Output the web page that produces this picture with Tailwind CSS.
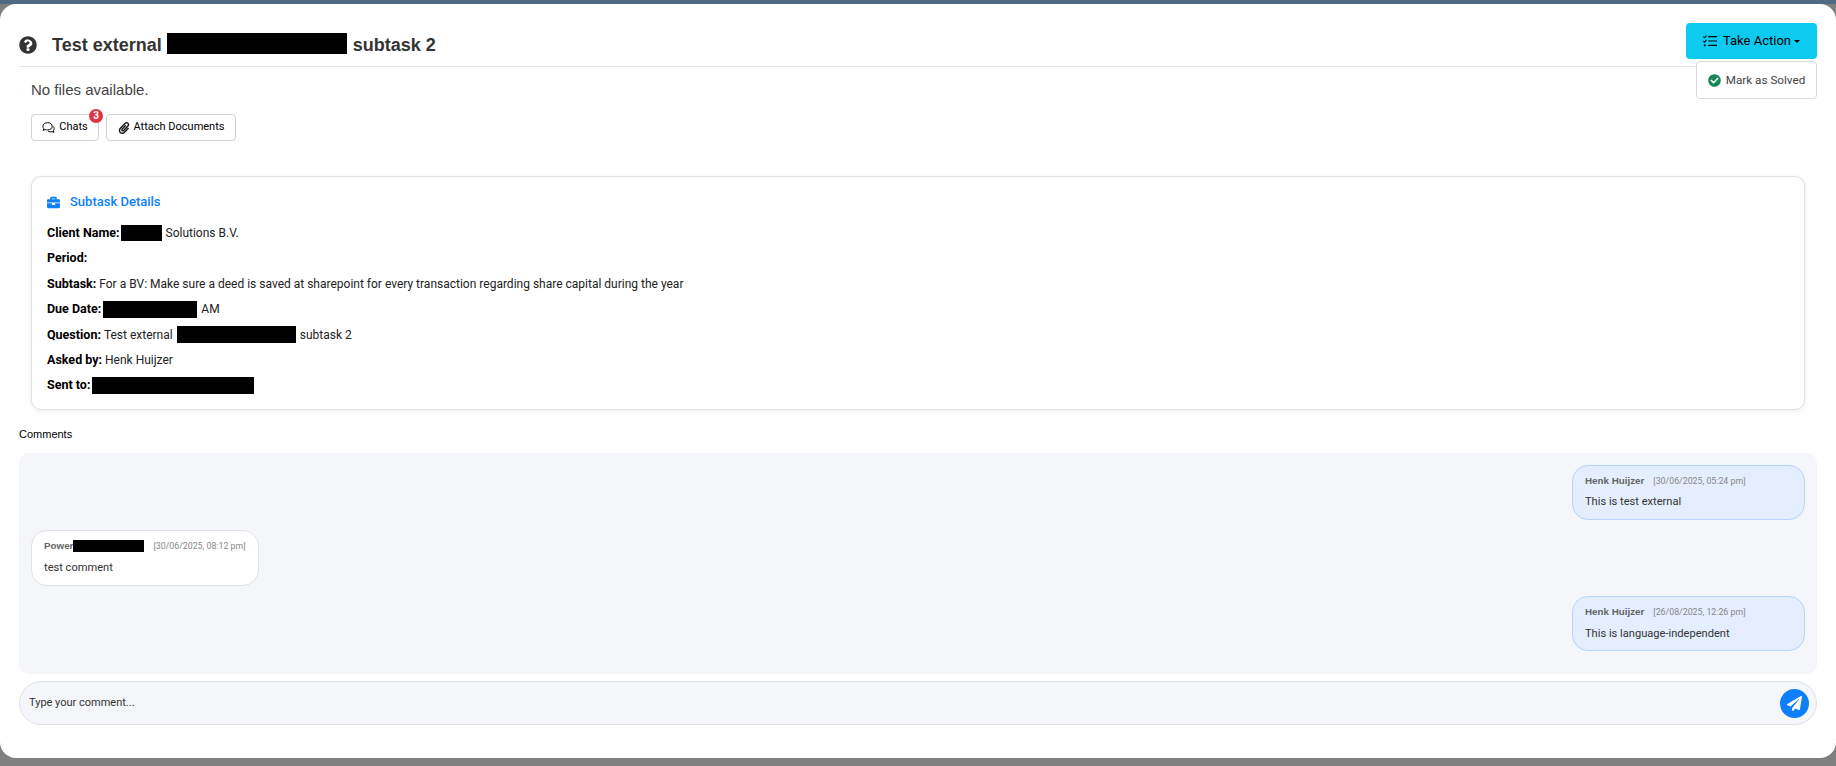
<!doctype html>
<html><head><meta charset="utf-8"><title>Subtask</title>
<script src="https://cdn.jsdelivr.net/npm/@tailwindcss/browser@4"></script></head>
<body class="m-0 h-[766px] w-[1836px] overflow-hidden bg-[#808080] font-['Roboto',sans-serif]">
<div class="h-[4px] bg-[#4f6b80]"></div>
<div class="relative h-[754px] rounded-[16px] bg-white px-[19px]">
  <header class="flex h-[63px] items-start border-b border-[#e2e4e7] font-['Liberation_Sans',sans-serif]">
    <div class="mt-[28px] flex h-[26px] items-center">
      <svg class="h-[18px] w-[18px] text-[#333]" viewBox="0 0 512 512" fill="currentColor"><path d="M504 256c0 137-111 248-248 248S8 393 8 256 119 8 256 8s248 111 248 248zM262.700 90c-54.500 0-89.200 23-116.500 63.800-3.500 5.300-2.300 12.400 2.800 16.300l34.700 26.300c5.200 3.900 12.600 3 16.700-2.100 17.900-22.700 30.100-35.800 57.300-35.800 20.400 0 45.700 13.100 45.700 33 0 15-12.400 22.700-32.600 34-23.600 13.200-54.800 29.700-54.800 70.900V320c0 6.600 5.400 12 12 12h56c6.600 0 12-5.400 12-12v-1.300c0-28.600 83.500-29.800 83.500-107.200 0-58.300-60.500-102.500-117.800-111.500zM256 338c-25.400 0-46 20.600-46 46s20.600 46 46 46 46-20.600 46-46-20.600-46-46-46z"/></svg>
      <h1 class="ml-[15px] mt-[-1px] flex items-center text-[18px] font-bold leading-none text-[#333]"><span>Test external</span><span class="ml-[5px] mr-[6px] mt-[-2px] h-[21px] w-[180px] bg-black"></span><span>subtask 2</span></h1>
    </div>
    <button class="ml-auto mt-[19px] flex h-[36px] w-[131px] items-center justify-center gap-[6px] rounded-[4px] bg-[#0dcaf0] font-['Roboto',sans-serif] text-[13px] text-black">
      <svg class="h-[14px] w-[14px]" viewBox="0 0 16 16" fill="none" stroke="currentColor" stroke-width="1.400"><path d="M6 3h10M6 8h10M6 13h10"/><path d="M0.500 3l1.300 1.300L4 1.800M0.500 8l1.300 1.300L4 6.800" stroke-width="1.200"/><path d="M1 13h2" stroke-width="2"/></svg>
      <span>Take Action</span><span class="ml-[-3px] h-0 w-0 border-x-[3.500px] border-t-[3.500px] border-x-transparent border-t-black"></span>
    </button>
  </header>
  <div class="absolute right-[19px] top-[57px] z-10 flex h-[38px] w-[121px] items-center justify-center gap-[5px] rounded-[4px] border border-[#d9dbde] bg-white pt-[1px] text-[11.700px] text-[#444]">
    <svg class="h-[13px] w-[13px] text-[#198754]" viewBox="0 0 512 512" fill="currentColor"><path d="M256 8C119 8 8 119 8 256s111 248 248 248 248-111 248-248S393 8 256 8zm-38 378L89 257l45-45 84 84 160-160 45 45z"/></svg>
    Mark as Solved
  </div>

  <div class="px-[12px] pt-[13px]">
    <p class="font-['Liberation_Sans',sans-serif] text-[15px] leading-[20px] text-[#444]">No files available.</p>
    <div class="mt-[14px] flex gap-[7px]">
      <button class="relative flex h-[27px] w-[68px] items-center justify-center gap-[4px] rounded-[4px] border border-[#cfd2d6] bg-white text-[11px] text-black">
        <svg class="h-[13px] w-[13px]" viewBox="0 0 16 16" fill="none" stroke="currentColor" stroke-width="1.200"><path d="M7 2C3.700 2 1 4 1 6.500c0 1.100.5 2 1.300 2.800L1.500 11.500l2.600-1C5 10.800 6 11 7 11c3.300 0 5.500-2 5.500-4.500S10.300 2 7 2z"/><path d="M13.500 6.500c1 .8 1.500 1.800 1.500 3 0 1-.4 1.800-1 2.500l.7 2-2.300-1c-.8.300-1.600.4-2.400.3-1-.100-1.800-.4-2.500-1"/></svg>
        Chats
        <span class="absolute right-[-5px] top-[-6px] flex h-[14px] w-[14px] items-center justify-center rounded-full bg-[#dc3545] text-[10px] font-bold leading-none text-white">3</span>
      </button>
      <button class="flex h-[27px] w-[130px] items-center justify-center gap-[4px] rounded-[4px] border border-[#cfd2d6] bg-white text-[11px] text-black">
        <svg class="h-[12px] w-[12px] text-[#1a1a1a]" viewBox="0 0 448 512" fill="currentColor"><path d="M43.246 466.142c-58.430-60.289-57.341-157.511 1.386-217.581L254.392 34c44.316-45.332 116.351-45.336 160.671 0 43.890 44.894 43.943 117.329 0 162.276L232.214 383.128c-29.855 30.537-78.633 30.111-107.982-.998-28.275-29.970-27.368-77.473 1.452-106.953l143.743-146.835c6.182-6.314 16.312-6.422 22.626-.241l22.861 22.379c6.315 6.182 6.422 16.312.241 22.626L171.427 319.927c-4.932 5.045-5.236 13.428-.648 18.292 4.372 4.634 11.245 4.711 15.688.165l182.849-186.851c19.613-20.062 19.613-52.725-.011-72.798-19.189-19.627-49.957-19.637-69.154 0L90.390 293.295c-34.763 35.560-35.299 93.120-1.191 128.313 34.010 35.093 88.985 35.137 123.058.286l172.060-175.999c6.177-6.319 16.307-6.433 22.626-.256l22.877 22.364c6.319 6.177 6.434 16.307.256 22.626l-172.060 175.998c-59.576 60.938-155.943 60.216-214.770-.485z"/></svg>
        Attach Documents
      </button>
    </div>
  </div>

  <section class="mx-[12px] mt-[35px] h-[234px] rounded-[10px] border border-[#dfe1e4] bg-white px-[15px] pt-[15px] text-[12px] leading-[20px] text-[#222] shadow-[0_1px_4px_rgba(0,0,0,0.08)]">
    <h2 class="flex items-center gap-[10px] text-[13px] font-medium leading-[20px] text-[#0d7ffb]">
      <svg class="h-[13px] w-[13px]" viewBox="0 0 512 512" fill="currentColor"><path d="M320 336c0 8.800-7.200 16-16 16h-96c-8.800 0-16-7.200-16-16v-48H0v144c0 25.600 22.400 48 48 48h416c25.600 0 48-22.400 48-48V288H320v48zm144-208h-80V80c0-25.600-22.400-48-48-48H176c-25.600 0-48 22.400-48 48v48H48c-25.600 0-48 22.400-48 48v80h512v-80c0-25.600-22.400-48-48-48zm-144 0H192V96h128v32z"/></svg>
      Subtask Details
    </h2>
    <div class="mt-[11px] flex flex-col gap-[5.400px]">
      <p class="flex items-center"><b class="text-[12.500px] font-bold text-black">Client Name:</b><span class="ml-[1px] mr-[4px] h-[16px] w-[41px] bg-black"></span>Solutions B.V.</p>
      <p><b class="text-[12.500px] font-bold text-black">Period:</b></p>
      <p><b class="text-[12.500px] font-bold text-black">Subtask:</b> For a BV: Make sure a deed is saved at sharepoint for every transaction regarding share capital during the year</p>
      <p class="flex items-center"><b class="text-[12.500px] font-bold text-black">Due Date:</b><span class="ml-[2px] mr-[4px] h-[17px] w-[94px] bg-black"></span>AM</p>
      <p class="flex items-center"><b class="text-[12.500px] font-bold text-black">Question:</b>&nbsp;Test external<span class="mx-[4px] h-[17px] w-[119px] bg-black"></span>subtask 2</p>
      <p><b class="text-[12.500px] font-bold text-black">Asked by:</b> Henk Huijzer</p>
      <p class="flex items-center"><b class="text-[12.500px] font-bold text-black">Sent to:</b><span class="ml-[2px] h-[17px] w-[162px] bg-black"></span></p>
    </div>
  </section>

  <h3 class="mt-[16px] font-['Liberation_Sans',sans-serif] text-[11px] leading-[16px] text-black">Comments</h3>
  <div class="mt-[11px] flex h-[221px] flex-col rounded-[10px] bg-[#f5f6fa] px-[12px] pt-[12px]">
    <div class="flex justify-end">
      <div class="h-[55px] w-[233px] rounded-[16px] border border-[#b6d4fe] bg-[#e4eefe] px-[12px] pt-[8px]">
        <div class="flex items-center whitespace-nowrap text-[8.800px] leading-[14px] text-[#888]"><b class="font-['Liberation_Sans',sans-serif] text-[9.800px] font-bold text-[#666]">Henk Huijzer</b><span class="ml-[9px]">[30/06/2025, 05:24 pm]</span></div>
        <p class="mt-[6px] text-[11.100px] leading-[16px] text-[#333]">This is test external</p>
      </div>
    </div>
    <div class="mt-[10px] flex justify-start">
      <div class="h-[56px] w-[228px] rounded-[16px] border border-[#dfe1e6] bg-white px-[12px] pt-[8px]">
        <div class="flex items-center whitespace-nowrap text-[8.800px] leading-[14px] text-[#888]"><b class="font-['Liberation_Sans',sans-serif] text-[9.800px] font-bold text-[#666]">Power</b><span class="h-[12px] w-[71px] shrink-0 bg-black"></span><span class="ml-[9px]">[30/06/2025, 08:12 pm]</span></div>
        <p class="mt-[7px] text-[11.100px] leading-[16px] text-[#333]">test comment</p>
      </div>
    </div>
    <div class="mt-[10px] flex justify-end">
      <div class="h-[55px] w-[233px] rounded-[16px] border border-[#b6d4fe] bg-[#e4eefe] px-[12px] pt-[8px]">
        <div class="flex items-center whitespace-nowrap text-[8.800px] leading-[14px] text-[#888]"><b class="font-['Liberation_Sans',sans-serif] text-[9.800px] font-bold text-[#666]">Henk Huijzer</b><span class="ml-[9px]">[26/08/2025, 12:26 pm]</span></div>
        <p class="mt-[7px] text-[11.100px] leading-[16px] text-[#333]">This is language-independent</p>
      </div>
    </div>
  </div>
  <div class="mt-[7px] flex h-[44px] items-center justify-between rounded-[22px] border border-[#dfe1e6] bg-[#f5f6fa] pl-[9px] pr-[7px]">
    <span class="text-[11px] text-[#333]">Type your comment...</span>
    <button class="flex h-[29px] w-[29px] items-center justify-center rounded-full bg-[#0d7ffb]">
      <svg class="h-[15px] w-[15px] text-white" viewBox="0 0 512 512" fill="currentColor"><path d="M476 3.200 12.500 270.600c-18.100 10.400-15.800 35.600 2.200 43.200L121 358.400l287.300-253.200c5.500-4.900 13.300 2.600 8.600 8.300L176 407v80.500c0 23.600 28.500 32.900 42.500 15.800L282 426l124.600 52.200c14.200 6 30.400-2.900 33-18.200l72-432C515 7.800 493.300-6.800 476 3.200z"/></svg>
    </button>
  </div>
</div>
</body></html>
